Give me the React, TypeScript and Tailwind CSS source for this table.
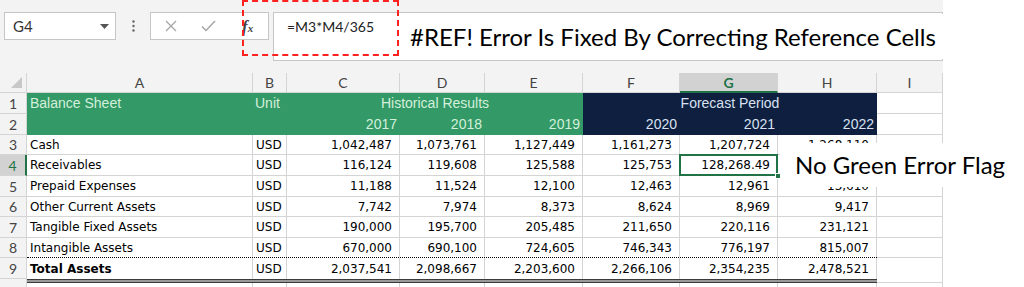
import React from "react";

type Col = "C" | "D" | "E" | "F" | "G" | "H";

const W: Record<string, string> = {
  A: "w-[226px]",
  B: "w-[34px]",
  C: "w-[113px]",
  D: "w-[85px]",
  E: "w-[98px]",
  F: "w-[97px]",
  G: "w-[98px]",
  H: "w-[99px]",
  I: "w-[66px]",
};

const NUM_COLS: Col[] = ["C", "D", "E", "F", "G", "H"];

const rows = [
  { n: 3, label: "Cash", h: "h-[20px]", v: ["1,042,487", "1,073,761", "1,127,449", "1,161,273", "1,207,724", "1,268,110"] },
  { n: 4, label: "Receivables", h: "h-[21px]", v: ["116,124", "119,608", "125,588", "125,753", "128,268.49", ""] },
  { n: 5, label: "Prepaid Expenses", h: "h-[21px]", v: ["11,188", "11,524", "12,100", "12,463", "12,961", "13,610"] },
  { n: 6, label: "Other Current Assets", h: "h-[20px]", v: ["7,742", "7,974", "8,373", "8,624", "8,969", "9,417"] },
  { n: 7, label: "Tangible Fixed Assets", h: "h-[21px]", v: ["190,000", "195,700", "205,485", "211,650", "220,116", "231,121"] },
];

const row8 = { n: 8, label: "Intangible Assets", v: ["670,000", "690,100", "724,605", "746,343", "776,197", "815,007"] };
const row9 = { n: 9, label: "Total Assets", v: ["2,037,541", "2,098,667", "2,203,600", "2,266,106", "2,354,235", "2,478,521"] };

function RowHead({ n, h, active }: { n: number | string; h: string; active?: boolean }) {
  return (
    <div
      className={`${h} flex w-[27px] shrink-0 items-center justify-center border-b border-[#d4d4d4] font-['Lato',sans-serif] text-[14px] ${
        active
          ? "border-r-2 border-r-[#217346] bg-[#d2d2d2] text-[#217346]"
          : "border-r bg-[#f3f3f3] text-[#444]"
      }`}
    >
      {n}
    </div>
  );
}

function DataCells({ label, v, bold, noBottom, selectRow }: { label: string; v: string[]; bold?: boolean; noBottom?: boolean; selectRow?: boolean }) {
  const b = noBottom ? "" : "border-b";
  return (
    <>
      <div className={`${W.A} ${b} flex h-full shrink-0 items-center border-r border-[#d4d4d4] pl-[3px] ${bold ? "font-bold" : ""}`}>{label}</div>
      <div className={`${W.B} ${b} flex h-full shrink-0 items-center border-r border-[#d4d4d4] pl-[3px]`}>USD</div>
      {NUM_COLS.map((c, i) => (
        <div
          key={c}
          className={`${W[c]} ${b} relative flex h-full shrink-0 items-center justify-end border-r border-[#d4d4d4] pr-[7px]`}
        >
          {v[i]}
          {selectRow && c === "G" ? (
            <>
              <div className="absolute -top-[1px] -left-[1px] -right-[1px] -bottom-[1px] z-10 border-2 border-[#217346]" />
              <div className="absolute -right-[4px] -bottom-[4px] z-20 h-[6px] w-[6px] border border-white bg-[#217346]" />
            </>
          ) : null}
        </div>
      ))}
    </>
  );
}

function ICell({ h, last }: { h: string; last?: boolean }) {
  return <div className={`${W.I} ${h} shrink-0 border-r border-[#d4d4d4] ${last ? "" : "border-b"} bg-white`} />;
}

export default function App() {
  return (
    <div className="relative h-[287px] w-[1024px] overflow-hidden bg-white font-['DejaVu_Sans',sans-serif] text-[12px] text-black">
      <div className="w-[943px]">
        {/* formula bar */}
        <div className="flex h-[73px] items-start bg-[#f3f3f3] pt-[12px]">
          <div className="ml-[4px] flex h-[28px] w-[112px] items-center justify-between border border-[#c6c6c6] bg-white pr-[6px] pl-[8px]">
            <span className="font-['Lato',sans-serif] text-[15px] text-[#333]">G4</span>
            <svg width="9" height="5" viewBox="0 0 9 5">
              <path d="M0 0 L9 0 L4.5 5 Z" fill="#555" />
            </svg>
          </div>
          <div className="flex h-[28px] w-[34px] items-center justify-center">
            <svg width="3" height="12" viewBox="0 0 3 12">
              <circle cx="1.5" cy="1.5" r="1.2" fill="#666" />
              <circle cx="1.5" cy="6" r="1.2" fill="#666" />
              <circle cx="1.5" cy="10.5" r="1.2" fill="#666" />
            </svg>
          </div>
          <div className="flex h-[28px] w-[119px] shrink-0 items-center border border-[#c6c6c6] bg-white">
            <svg className="ml-[14px] shrink-0" width="12" height="12" viewBox="0 0 12 12">
              <path d="M1 1 L11 11 M11 1 L1 11" stroke="#a6a6a6" strokeWidth="1.3" />
            </svg>
            <svg className="ml-[24px] shrink-0" width="15" height="12" viewBox="0 0 15 12">
              <path d="M1 6.5 L5 10.5 L14 1" stroke="#a6a6a6" strokeWidth="1.5" fill="none" />
            </svg>
            <span className="ml-[26px] shrink-0 whitespace-nowrap font-['Liberation_Serif',serif] text-[17px] font-bold italic leading-none text-[#444]">
              f<span className="text-[11px]">x</span>
            </span>
          </div>
          <div className="ml-[4px] h-[49px] flex-1 border border-[#c6c6c6] bg-white pt-[3px] pl-[13px] font-['Lato',sans-serif] text-[14px] text-[#222]">
            =M3*M4/365
          </div>
        </div>

        {/* column headers */}
        <div className="flex h-[20px] bg-[#f3f3f3] font-['Lato',sans-serif] text-[14px] text-[#444]">
          <div className="relative w-[27px] shrink-0 border-r border-b border-[#d4d4d4]">
            <svg className="absolute right-[4px] bottom-[4px]" width="11" height="11" viewBox="0 0 11 11">
              <path d="M11 0 L11 11 L0 11 Z" fill="#c8c8c8" />
            </svg>
          </div>
          {["A", "B", "C", "D", "E", "F", "G", "H", "I"].map((c) =>
            c === "G" ? (
              <div
                key={c}
                className={`${W[c]} flex shrink-0 items-center justify-center border-r border-b-2 border-[#d4d4d4] border-b-[#217346] bg-[#d2d2d2] font-bold text-[#217346]`}
              >
                {c}
              </div>
            ) : (
              <div key={c} className={`${W[c]} flex shrink-0 items-center justify-center border-r border-b border-[#d4d4d4]`}>
                {c}
              </div>
            )
          )}
        </div>

        {/* row 1 */}
        <div className="flex h-[21px] font-['Liberation_Sans',sans-serif] text-[14px]">
          <RowHead n={1} h="h-[21px]" />
          <div className="flex w-[556px] shrink-0 items-center bg-[#339966] text-[#d3f0dc]">
            <div className={`${W.A} shrink-0 pl-[3px]`}>Balance Sheet</div>
            <div className={`${W.B} shrink-0 pl-[2px]`}>Unit</div>
            <div className="flex-1 text-center">Historical Results</div>
          </div>
          <div className="flex w-[294px] shrink-0 items-center justify-center bg-[#0e1f3f] text-[#d9e1f2]">Forecast Period</div>
          <ICell h="h-[21px]" />
        </div>

        {/* row 2 */}
        <div className="flex h-[21px] font-['Liberation_Sans',sans-serif] text-[14px]">
          <RowHead n={2} h="h-[21px]" />
          <div className="flex w-[556px] shrink-0 items-center bg-[#339966] text-[#d3f0dc]">
            <div className={`${W.A} shrink-0`} />
            <div className={`${W.B} shrink-0`} />
            <div className={`${W.C} shrink-0 pr-[3px] text-right`}>2017</div>
            <div className={`${W.D} shrink-0 pr-[3px] text-right`}>2018</div>
            <div className={`${W.E} shrink-0 pr-[3px] text-right`}>2019</div>
          </div>
          <div className="flex w-[294px] shrink-0 items-center bg-[#0e1f3f] text-[#d9e1f2]">
            <div className={`${W.F} shrink-0 pr-[3px] text-right`}>2020</div>
            <div className={`${W.G} shrink-0 pr-[3px] text-right`}>2021</div>
            <div className={`${W.H} shrink-0 pr-[3px] text-right`}>2022</div>
          </div>
          <ICell h="h-[21px]" />
        </div>

        {/* rows 3 - 7 */}
        {rows.map((r) => (
          <div key={r.n} className={`flex ${r.h}`}>
            <RowHead n={r.n} h={r.h} active={r.n === 4} />
            <DataCells label={r.label} v={r.v} selectRow={r.n === 4} />
            <ICell h={r.h} />
          </div>
        ))}

        {/* row 8 with dotted bottom */}
        <div className="flex h-[20px]">
          <RowHead n={row8.n} h="h-[20px]" />
          <div className="flex h-[20px] w-[850px] shrink-0 flex-col">
            <div className="flex h-[19px]">
              <DataCells label={row8.label} v={row8.v} noBottom />
            </div>
            <div className="h-[1px] border-t border-dotted border-black" />
          </div>
          <ICell h="h-[20px]" />
        </div>

        {/* row 9 total */}
        <div className="flex h-[21px]">
          <RowHead n={row9.n} h="h-[21px]" />
          <div className="flex h-[21px] w-[850px] shrink-0">
            <DataCells label={row9.label} v={row9.v} bold noBottom />
          </div>
          <ICell h="h-[21px]" last />
        </div>
        <div className="flex h-[4px]">
          <div className="h-[4px] w-[27px] shrink-0 border-r border-[#d4d4d4] bg-[#f3f3f3]" />
          <div className="h-[4px] w-[850px] shrink-0 border-y border-[#3a3a3a] bg-[#9a9a9a]" />
          <div className="h-[4px] w-[66px] shrink-0 border-r border-b border-[#d4d4d4]" />
        </div>

        {/* row 10 partial */}
        <div className="flex h-[10px]">
          <div className="w-[27px] shrink-0 border-r border-[#d4d4d4] bg-[#f3f3f3]" />
          {["A", "B", "C", "D", "E", "F", "G", "H", "I"].map((c) => (
            <div key={c} className={`${W[c]} shrink-0 border-r border-[#d4d4d4]`} />
          ))}
        </div>
      </div>

      {/* red dashed highlight round the formula */}
      <div className="absolute top-0 left-[242px] h-[56px] w-[157px] border-2 border-dashed border-[#ff2020]" />

      {/* callouts */}
      <div className="absolute top-[14px] left-[405px] flex h-[45px] w-[550px] items-center bg-white pl-[5px] font-['Lato',sans-serif] text-[24px] text-black">
        #REF! Error Is Fixed By Correcting Reference Cells
      </div>
      <div className="absolute top-[143px] left-[780px] flex h-[44px] w-[244px] items-center bg-white pl-[15px] font-['Lato',sans-serif] text-[24px] text-black">
        No Green Error Flag
      </div>
    </div>
  );
}
